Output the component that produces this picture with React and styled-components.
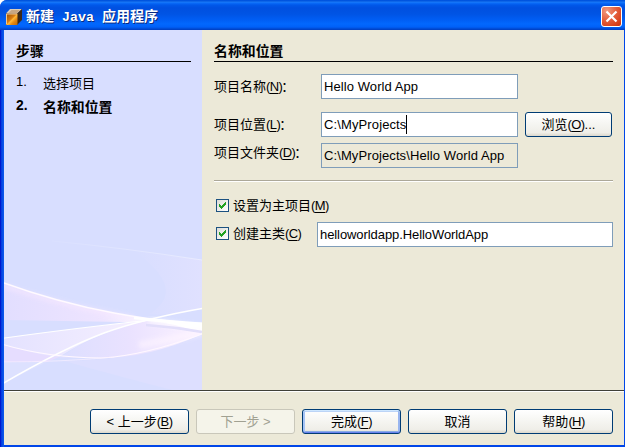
import React from "react";
import styled, { createGlobalStyle } from "styled-components";

const Global = createGlobalStyle`
  * { box-sizing: border-box; }
  html, body { margin: 0; padding: 0; overflow: hidden; }
  body {
    font: 13px/16px "Liberation Sans", "Noto Sans CJK SC", sans-serif;
    color: #000;
    cursor: default;
  }
`;

const Dialog = styled.div`
  width: 625px;
  height: 447px;
  display: flex;
  flex-direction: column;
  padding: 0 1px 2px 4px;
  background: linear-gradient(90deg, #0019cf 0, #0019cf 1px, #0138dd 1px, #0a52ea 3px, #0a5ce8 4px, #0046e8 4px);
  border-radius: 7px 0 0 0;
  overflow: hidden;
`;

const TitleBar = styled.header`
  height: 30px;
  flex: none;
  margin: 0 -1px 0 -4px;
  padding: 3px 3px 0 6px;
  display: flex;
  align-items: center;
  background: linear-gradient(180deg, #0058e6 0, #0051d8 1px, #1c7cf8 2px, #0a6cf8 3px, #0058ea 5px, #0050e0 8px, #0054e4 14px, #005cf2 19px, #0268fe 24px, #0060f8 27px, #0048d0 29px, #003dc0 30px);
`;

const Title = styled.h1`
  flex: 1;
  margin: 0 0 0 4px;
  font: bold 14px/20px "Noto Sans CJK SC", sans-serif;
  color: #fff;
  text-shadow: 1px 1px 0 #0a2a80;
  white-space: pre;
`;

const Mono = styled.span`
  font-family: "Liberation Mono", monospace;
  font-size: 13.33px;
`;

const CloseButton = styled.button`
  width: 21px;
  height: 21px;
  padding: 0;
  border: 1px solid #fff;
  border-radius: 3px;
  background: radial-gradient(circle at 25% 20%, #f09a80 0, #e4603e 45%, #d8401a 80%, #c03410 100%);
  svg { display: block; margin: 3px; }
`;

const Body = styled.div`
  height: 360px;
  flex: none;
  display: flex;
  background: #ece9d8;
`;

const Sidebar = styled.aside`
  width: 198px;
  height: 360px;
  background: #d8deff;
  display: grid;
`;

const Waves = styled.svg`
  grid-area: 1 / 1;
  align-self: end;
`;

const Steps = styled.section`
  grid-area: 1 / 1;
  padding: 12px 11px 0 12px;
`;

const Heading = styled.h2`
  height: 20px;
  margin: 0;
  border-bottom: 1px solid #000;
  font-size: 13.9px;
  line-height: 18px;
  font-weight: bold;
`;

const StepList = styled.div`
  padding-top: 12px;
`;

const Step = styled.div`
  display: grid;
  grid-template-columns: 27px 1fr;
  height: 23px;
  font-weight: ${(p) => (p.$current ? "bold" : "normal")};
  font-size: ${(p) => (p.$current ? "13.9px" : "13px")};
  line-height: 16px;
`;

const StepText = styled.span`
  padding-top: 2px;
`;

const Content = styled.main`
  width: 411px;
  padding: 12px 0 0 12px;
`;

const Field = styled.div`
  display: grid;
  grid-template-columns: 107px 197px 87px;
  align-items: center;
  height: 25px;
  margin-top: ${(p) => p.$top}px;
`;

const Label = styled.label`
  white-space: nowrap;
  padding-bottom: ${(p) => p.$lift || 0}px;
`;

const Access = styled.span`
  letter-spacing: -0.6px;
`;

const Colon = styled.span`
  margin-left: -1px;
`;

const TextBox = styled.div`
  height: 25px;
  display: flex;
  align-items: center;
  padding-left: 2px;
  border: 1px solid #7f9db9;
  background: ${(p) => (p.$readOnly ? "#ece9d8" : "#fff")};
  letter-spacing: ${(p) => p.$spacing || 0}px;
  white-space: nowrap;
`;

const Caret = styled.span`
  width: 1px;
  height: 19px;
  background: #000;
`;

const Button = styled.button`
  width: ${(p) => p.$width || 99}px;
  height: 25px;
  padding: 0;
  border: 1px solid ${(p) => (p.disabled ? "#c9c7ba" : "#003c74")};
  border-radius: 3px;
  background: ${(p) => (p.disabled ? "#f5f4ea" : "linear-gradient(180deg, #fff 0, #f5f5f1 50%, #efeee8 85%, #dcd8cc 100%)")};
  box-shadow: ${(p) =>
    p.$isDefault
      ? "inset 0 1px #cee7ff, inset 0 -1px #6982ee, inset 2px 0 #a5c3f5, inset -2px 0 #98b5ef, inset 0 2px #bcd4f6, inset 0 -2px #89ade4"
      : "none"};
  color: ${(p) => (p.disabled ? "#a1a192" : "#000")};
  font: inherit;
`;

const Browse = styled(Button)`
  margin-left: 7px;
`;

const Separator = styled.hr`
  height: 2px;
  margin: 12px 0 0;
  border: 0;
  border-top: 1px solid #aca899;
  background: #fff;
`;

const CheckRow = styled.div`
  display: grid;
  grid-template-columns: 13px 84px 300px;
  align-items: center;
  height: 25px;
  padding-left: 2px;
  margin-top: ${(p) => p.$top}px;
`;

const CheckBox = styled.span`
  width: 13px;
  height: 13px;
  margin-top: ${(p) => p.$lift ? -2 : 0}px;
  border: 1px solid #1c5180;
  background: linear-gradient(135deg, #dcdcd7, #fff);
  svg { display: block; }
`;

const CheckLabel = styled.label`
  padding-left: 4px;
  padding-bottom: ${(p) => p.$lift ? 2 : 0}px;
  white-space: nowrap;
`;

const MainClass = styled(TextBox)`
  margin-left: 4px;
`;

const Footer = styled.footer`
  height: 55px;
  flex: none;
  display: flex;
  gap: 7px;
  padding: 18px 0 0 86px;
  border-top: 1px solid #404038;
  box-shadow: inset 0 1px #fff;
  background: #ece9d8;
`;

const Key = styled.u`
  text-decoration-thickness: 1px;
  text-underline-offset: 2px;
`;

function Mnemonic({ children }) {
  return <Access>(<Key>{children}</Key>)</Access>;
}

function AppIcon() {
  return (
    <svg width="16" height="16" viewBox="0 0 16 16">
      <defs>
        <linearGradient id="box" x1="0" y1="0" x2="1" y2="1">
          <stop offset="0" stopColor="#8e4a08" />
          <stop offset="0.450" stopColor="#d87c10" />
          <stop offset="0.550" stopColor="#ffb838" />
          <stop offset="0.700" stopColor="#e88a10" />
          <stop offset="1" stopColor="#c06a08" />
        </linearGradient>
      </defs>
      <path d="M0 4.500 4 0H16L11.500 4.500z" fill="#dccdb8" />
      <path d="M2.500 4 5.500 1H14L11 4z" fill="#c8a884" />
      <path d="M11 4.500 16 0V11L11 16z" fill="#3c2a18" />
      <path d="M0 4.500h11.500V16H0z" fill="url(#box)" />
      <path d="M0.500 15V5H11" fill="none" stroke="#f0c890" />
    </svg>
  );
}

function WaveArt() {
  return (
    <Waves width="198" height="180" viewBox="0 210 198 180">
      <defs>
        <linearGradient id="upper" x1="0" y1="0" x2="1" y2="0">
          <stop offset="0" stopColor="#e2deff" />
          <stop offset="0.500" stopColor="#eee4ff" />
          <stop offset="0.800" stopColor="#fff" />
          <stop offset="1" stopColor="#fff" />
        </linearGradient>
        <linearGradient id="middle" x1="0" y1="0" x2="1" y2="0">
          <stop offset="0" stopColor="#e4e2ff" />
          <stop offset="1" stopColor="#f6f0ff" />
        </linearGradient>
        <linearGradient id="lower" x1="0" y1="0" x2="1" y2="0">
          <stop offset="0" stopColor="#dcdeff" />
          <stop offset="0.500" stopColor="#eae2ff" />
          <stop offset="1" stopColor="#fcf2ff" />
        </linearGradient>
        <linearGradient id="edge" x1="0" y1="0" x2="1" y2="0">
          <stop offset="0" stopColor="#fff" stopOpacity="0.050" />
          <stop offset="1" stopColor="#fff" stopOpacity="0.400" />
        </linearGradient>
        <linearGradient id="haze" x1="0" y1="0" x2="1" y2="0">
          <stop offset="0" stopColor="#e0e0ff" stopOpacity="0" />
          <stop offset="1" stopColor="#e0e1ff" />
        </linearGradient>
        <filter id="soft" x="-10%" y="-30%" width="120%" height="160%">
          <feGaussianBlur stdDeviation="0.700" />
        </filter>
        <filter id="wide" x="-10%" y="-50%" width="120%" height="200%">
          <feGaussianBlur stdDeviation="2" />
        </filter>
      </defs>
      <path d="M130 251L198 260V308Q165 316 145 314Q185 290 130 251Z" fill="url(#haze)" />
      <path d="M48 241Q120 248 198 260" fill="none" stroke="url(#edge)" />
      <path d="M0 283Q55 303 110 313T198 323V334Q165 323 120 322L0 320Z" fill="url(#upper)" />
      <path d="M60 361Q140 360 198 335V390H168Q110 375 60 361Z" fill="#dddfff" />
      <path d="M55 358Q95 331 142 321Q175 323 198 334Q145 358 97 358Z" fill="url(#lower)" />
      <path d="M0 338Q80 327 142 321Q95 331 55 357Q28 355 0 345Z" fill="url(#middle)" />
      <path d="M0 345Q35 355 55 357L43 362H0Z" fill="#e6ddff" />
      <path d="M0 383Q20 373 43 362L0 363Z" fill="#dde1ff" />
      <path d="M145 320Q175 326 198 327" fill="none" stroke="#fff" strokeWidth="5" opacity="0.700" filter="url(#wide)" />
      <path d="M198 332Q160 341 135 345" fill="none" stroke="#fff6ff" strokeWidth="7" opacity="0.550" filter="url(#wide)" />
      <path d="M142 325Q170 327 198 332" fill="none" stroke="#e2defa" strokeWidth="2.500" filter="url(#soft)" />
      <path d="M0 286Q55 305 130 318" fill="none" stroke="#faeaff" strokeWidth="4" opacity="0.550" filter="url(#wide)" />
      <g fill="none" stroke="#fff" filter="url(#soft)">
        <path d="M-3 282Q55 303 110 313T201 323.500" strokeWidth="1.600" stroke="#fffaff" />
        <path d="M130 318Q160 321 201 324" strokeWidth="2.500" />
        <path d="M-3 338.500Q80 327 148 320" strokeWidth="1.200" />
        <path d="M-3 384.500Q60 348 100 333Q142 318 201 308" strokeWidth="1.500" />
        <path d="M-3 344Q45 358 97 358Q140 356 201 333" strokeWidth="1.100" stroke="#fff8ff" />
        <path d="M-3 362Q60 362 110 357" strokeWidth="1" stroke="#faf0ff" opacity="0.700" />
      </g>
    </Waves>
  );
}

function Check({ lift }) {
  return (
    <CheckBox $lift={lift}>
      <svg width="11" height="11" viewBox="0 0 11 11" shapeRendering="crispEdges">
        <path d="M2 4h1v1h1v1h1v-1h1v-1h1v-1h1v-1h1v3h-1v1h-1v1h-1v1h-1v1h-1v-1h-1v-1h-1z" fill="#21a121" />
      </svg>
    </CheckBox>
  );
}

export default function App() {
  return (
    <>
      <Global />
      <Dialog>
        <TitleBar>
          <AppIcon />
          <Title>新建<Mono> Java </Mono>应用程序</Title>
          <CloseButton aria-label="关闭">
            <svg width="13" height="13" viewBox="0 0 13 13">
              <path d="M1.500 1.500l10 10M11.500 1.500l-10 10" stroke="#fff" strokeWidth="2.200" />
            </svg>
          </CloseButton>
        </TitleBar>
        <Body>
          <Sidebar>
            <WaveArt />
            <Steps>
              <Heading>步骤</Heading>
              <StepList>
                <Step><span>1.</span><StepText>选择项目</StepText></Step>
                <Step $current><span>2.</span><StepText>名称和位置</StepText></Step>
              </StepList>
            </Steps>
          </Sidebar>
          <Content>
            <Heading>名称和位置</Heading>
            <Field $top={12}>
              <Label>项目名称<Mnemonic>N</Mnemonic><Colon>：</Colon></Label>
              <TextBox $spacing={0.08}>Hello World App</TextBox>
            </Field>
            <Field $top={13}>
              <Label>项目位置<Mnemonic>L</Mnemonic><Colon>：</Colon></Label>
              <TextBox $spacing={0.12}>C:\MyProjects<Caret /></TextBox>
              <Browse $width={87}>浏览<Mnemonic>O</Mnemonic>...</Browse>
            </Field>
            <Field $top={6}>
              <Label $lift={6}>项目文件夹<Mnemonic>D</Mnemonic><Colon>：</Colon></Label>
              <TextBox $readOnly $spacing={0.1}>C:\MyProjects\Hello World App</TextBox>
            </Field>
            <Separator />
            <CheckRow $top={11}>
              <Check />
              <CheckLabel>设置为主项目<Mnemonic>M</Mnemonic></CheckLabel>
            </CheckRow>
            <CheckRow $top={4}>
              <Check lift />
              <CheckLabel $lift>创建主类<Mnemonic>C</Mnemonic></CheckLabel>
              <MainClass $spacing={-0.08}>helloworldapp.HelloWorldApp</MainClass>
            </CheckRow>
          </Content>
        </Body>
        <Footer>
          <Button>&lt; 上一步<Mnemonic>B</Mnemonic></Button>
          <Button disabled>下一步 &gt;</Button>
          <Button $isDefault>完成<Mnemonic>F</Mnemonic></Button>
          <Button>取消</Button>
          <Button>帮助<Mnemonic>H</Mnemonic></Button>
        </Footer>
      </Dialog>
    </>
  );
}
